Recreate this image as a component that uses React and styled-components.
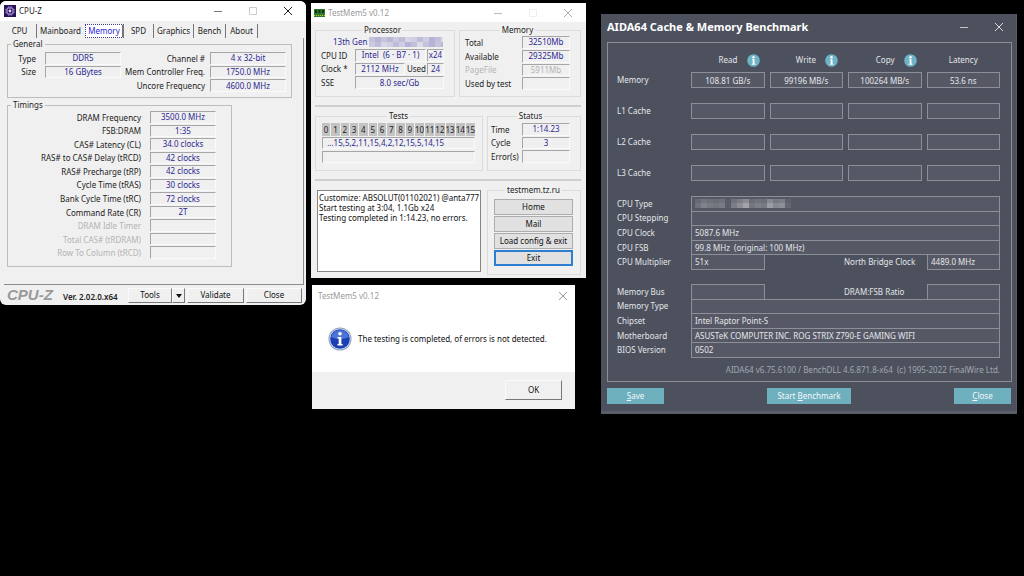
import React, { useId } from 'react';
import styled, { createGlobalStyle, css } from 'styled-components';

const GlobalStyle = createGlobalStyle`
    * {
        box-sizing: border-box;
    }
    body {
        margin: 0;
        background: #000;
    }
    button, input, textarea {
        font: inherit;
        color: inherit;
        margin: 0;
        min-width: 0;
        border-radius: 0;
        outline: none;
    }
`;

const sans = `"Noto Sans", "Open Sans", sans-serif`;

/* ---------- desktop ---------- */

const Desktop = styled.main`
    min-height: 100vh;
    background: #000;
    display: grid;
    grid-template-columns: 306fr 280fr 431fr;
    align-items: start;
    padding-right: 7px;
`;

const Column = styled.div`
    display: flex;
    flex-direction: column;
    min-width: 0;
    padding: ${(props) => props.$pad};
`;

const Window = styled.section`
    background: ${(props) => props.$bg || '#f0f0f0'};
    border-radius: ${(props) => props.$radius || '0'};
    overflow: hidden;
    font: 8px/10px ${sans};
    color: #222;
`;

const TitleBar = styled.header`
    height: ${(props) => props.$height || '20px'};
    background: ${(props) => props.$bg || '#fff'};
    color: ${(props) => props.$color || '#222'};
    padding: ${(props) => props.$pad || '0 13px 0 4px'};
    display: flex;
    align-items: center;
    gap: 3px;
`;

const Title = styled.h1`
    flex: 1;
    margin: 0;
    font: ${(props) => props.$font || '400 8px/12px'} ${sans};
    white-space: nowrap;
`;

const Controls = styled.div`
    display: flex;
    gap: ${(props) => props.$gap || '25px'};
`;

const ControlButton = styled.button`
    display: flex;
    border: 0;
    padding: 0;
    background: none;
    color: ${(props) => props.$color || 'inherit'};
`;

const controlPaths = {
    Minimize: 'M1 5.5H9',
    Maximize: 'M1.5 1.5H8.5V8.5H1.5Z',
    Close: 'M1 1L9 9M9 1L1 9',
};

function Control({ name, color }) {
    return (
        <ControlButton type="button" aria-label={name} $color={color}>
            <svg width="10" height="10" viewBox="0 0 10 10">
                <path d={controlPaths[name]} fill="none" stroke="currentColor" />
            </svg>
        </ControlButton>
    );
}

/* ---------- classic controls ---------- */

const Group = styled.fieldset`
    border: 1px solid ${(props) => props.$line || '#bdbdbd'};
    margin: 0;
    min-width: 0;
    padding: ${(props) => props.$pad};
    flex: ${(props) => props.$flex || 'none'};
`;

const Legend = styled.legend`
    padding: 0 2px;
    margin-left: ${(props) => (props.$center ? 'auto' : '3px')};
    margin-right: auto;
    line-height: 10px;
`;

const Rows = styled.div`
    display: grid;
    grid-template-rows: repeat(${(props) => props.$count}, 1fr);
    height: ${(props) => props.$height};
`;

const Row = styled.div`
    display: flex;
    align-items: stretch;
    gap: ${(props) => props.$gap || '0'};
    min-width: 0;
    min-height: 0;
`;

const Label = styled.label`
    flex: ${(props) => (props.$width ? `0 0 ${props.$width}` : '1')};
    text-align: ${(props) => props.$align || 'left'};
    color: ${(props) => (props.$off ? '#b4b4b4' : '#222')};
    align-self: center;
    white-space: nowrap;
`;

const Readout = styled.input`
    flex: ${(props) => (props.$width ? `0 0 ${props.$width}` : '1')};
    width: 100%;
    padding: 0;
    margin-bottom: 1px;
    background: #f0f0f0;
    border: 1px solid;
    border-color: #a6a6a6 #fafafa #fafafa #a6a6a6;
    color: ${(props) => (props.$off ? '#b4b4b4' : '#2c2890')};
    text-align: ${(props) => props.$align || 'center'};
`;

function LabeledReadout({ label, value = '', labelWidth, width, align, off, labelGap }) {
    const id = useId();
    return (
        <Row $gap={labelGap}>
            <Label htmlFor={id} $width={labelWidth} $align={align} $off={off}>{label}</Label>
            <Readout id={id} readOnly value={value} $width={width} $off={off} />
        </Row>
    );
}

/* ---------- CPU-Z ---------- */

const TabList = styled.nav`
    display: flex;
    padding: 3px 0 0 3px;
`;

const Tab = styled.button`
    width: ${(props) => props.$width};
    height: 14px;
    padding: 0;
    border: 0;
    border-right: 1px solid #777;
    background: none;
    white-space: nowrap;
    ${(props) => props.$plain && css`
        border-right-color: transparent;
    `}
    ${(props) => props.$active && css`
        border: 1px dotted #3a3a8c;
        border-right: 2px solid #777;
        background: #fff;
        color: #2a22d8;
    `}
`;

const TabPanel = styled.div`
    margin: 0 2px 0 4px;
    padding: 1px 0 17px 3px;
    border-right: 1px solid #8c8c8c;
    border-bottom: 1px solid #8c8c8c;
`;

const GeneralGrid = styled.div`
    display: grid;
    grid-template-columns: 113px 1fr;
`;

const TimingsWrap = styled.div`
    margin: 2px 71px 0 0;
`;

const CpuzFooter = styled.footer`
    display: flex;
    align-items: center;
    gap: 2px;
    height: 20px;
    padding: 0 4px 0 7px;
`;

const CpuzName = styled.strong`
    flex: 0 0 54px;
    font: italic 700 15px/18px "Liberation Sans", sans-serif;
    color: #999;
`;

const Version = styled.span`
    flex: 1;
    font: 600 8px/10px ${sans};
    padding-top: 3px;
    white-space: nowrap;
`;

const RaisedButton = styled.button`
    flex: 0 0 ${(props) => props.$width || '57px'};
    height: ${(props) => props.$height || '15px'};
    padding: 0;
    border: 1px solid;
    border-color: #fafafa #777 #777 #fafafa;
    background: #f0f0f0;
    color: #111;
`;

const SplitButton = styled.div`
    display: flex;
`;

const tabs = [
    ['CPU', '34px'],
    ['Mainboard', '48px'],
    ['Memory', '39px'],
    ['SPD', '30px'],
    ['Graphics', '40px'],
    ['Bench', '32px'],
    ['About', '32px'],
];

const timings = [
    ['DRAM Frequency', '3500.0 MHz'],
    ['FSB:DRAM', '1:35'],
    ['CAS# Latency (CL)', '34.0 clocks'],
    ['RAS# to CAS# Delay (tRCD)', '42 clocks'],
    ['RAS# Precharge (tRP)', '42 clocks'],
    ['Cycle Time (tRAS)', '30 clocks'],
    ['Bank Cycle Time (tRC)', '72 clocks'],
    ['Command Rate (CR)', '2T'],
    ['DRAM Idle Timer', ''],
    ['Total CAS# (tRDRAM)', ''],
    ['Row To Column (tRCD)', ''],
];

function CpuzIcon() {
    return (
        <svg width="12" height="12" viewBox="0 0 12 12" aria-hidden="true">
            <rect width="12" height="12" fill="#2a1259" />
            <rect x="3" y="3" width="6" height="6" rx="1" fill="none" stroke="#c9b8ee" />
            <path d="M4.5 1V3M6 1V3M7.5 1V3M4.5 9V11M6 9V11M7.5 9V11M1 4.5H3M1 6H3M1 7.5H3M9 4.5H11M9 6H11M9 7.5H11" stroke="#9a83d0" strokeWidth=".6" />
            <circle cx="6" cy="6" r="1.4" fill="#e8defc" />
        </svg>
    );
}

function CpuZ() {
    return (
        <Window $radius="6px" aria-label="CPU-Z">
            <TitleBar>
                <CpuzIcon />
                <Title>CPU-Z</Title>
                <Controls>
                    <Control name="Minimize" color="#777" />
                    <Control name="Maximize" color="#ccc" />
                    <Control name="Close" color="#222" />
                </Controls>
            </TitleBar>
            <TabList role="tablist">
                {tabs.map(([name, width]) => (
                    <Tab
                        key={name}
                        type="button"
                        role="tab"
                        aria-selected={name === 'Memory'}
                        $width={width}
                        $active={name === 'Memory'}
                        $plain={name === 'Mainboard'}
                    >
                        {name}
                    </Tab>
                ))}
            </TabList>
            <TabPanel role="tabpanel">
                <Column $pad="0 11px 0 0">
                    <Group $pad="3px 5px 4px 0">
                        <Legend>General</Legend>
                        <GeneralGrid>
                            <Rows $count={3} $height="41px">
                                <LabeledReadout label="Type" value="DDR5" width="76px" align="right" labelGap="9px" />
                                <LabeledReadout label="Size" value="16 GBytes" width="76px" align="right" labelGap="9px" />
                            </Rows>
                            <Rows $count={3} $height="41px">
                                <LabeledReadout label="Channel #" value="4 x 32-bit" width="76px" align="right" labelGap="5px" />
                                <LabeledReadout label="Mem Controller Freq." value="1750.0 MHz" width="76px" align="right" labelGap="5px" />
                                <LabeledReadout label="Uncore Frequency" value="4600.0 MHz" width="76px" align="right" labelGap="5px" />
                            </Rows>
                        </GeneralGrid>
                    </Group>
                </Column>
                <TimingsWrap>
                    <Group $pad="1px 15px 6px 0">
                        <Legend>Timings</Legend>
                        <Rows $count={11} $height="149px">
                            {timings.map(([label, value]) => (
                                <LabeledReadout
                                    key={label}
                                    label={label}
                                    value={value}
                                    width="66px"
                                    align="right"
                                    labelGap="9px"
                                    off={!value}
                                />
                            ))}
                        </Rows>
                    </Group>
                </TimingsWrap>
            </TabPanel>
            <CpuzFooter>
                <CpuzName>CPU-Z</CpuzName>
                <Version>Ver. 2.02.0.x64</Version>
                <SplitButton>
                    <RaisedButton type="button" $width="44px">Tools</RaisedButton>
                    <RaisedButton type="button" $width="13px" aria-label="More tools">
                        <svg width="6" height="4" viewBox="0 0 6 4"><path d="M0 0H6L3 4Z" fill="#111" /></svg>
                    </RaisedButton>
                </SplitButton>
                <RaisedButton type="button">Validate</RaisedButton>
                <RaisedButton type="button" $width="56px">Close</RaisedButton>
            </CpuzFooter>
        </Window>
    );
}

/* ---------- TestMem5 ---------- */

const MemBody = styled.div`
    padding: 3px 5px 3px 4px;
`;

const Panels = styled.div`
    display: flex;
    gap: ${(props) => props.$gap || '4px'};
`;

const Divider = styled.hr`
    height: 2px;
    margin: 8px 0 4px;
    border: 0;
    background: #cfcfcf;
`;

const CpuName = styled.div`
    display: flex;
    align-items: center;
    gap: 2px;
    padding-left: 12px;
    color: #2c2890;
    white-space: nowrap;
`;

const TestCells = styled.ol`
    display: grid;
    grid-template-columns: repeat(16, 1fr);
    gap: 1px;
    margin: 0;
    padding: 0;
    list-style: none;
`;

const TestCell = styled.li`
    height: 13px;
    line-height: 13px;
    background: #c3c3c3;
    text-align: center;
`;

const TestStack = styled.div`
    display: grid;
    grid-template-rows: 13px 13px 13px;
    row-gap: 1px;
`;

const Log = styled.textarea`
    flex: 1;
    height: 82px;
    margin: 5px 2px 0;
    padding: 2px 1px;
    border: 1px solid #858585;
    background: #fff;
    color: #111;
    resize: none;
    overflow: hidden;
    white-space: pre;
`;

const FlatButton = styled.button`
    height: 16px;
    padding: 0;
    border: 1px solid #adadad;
    background: #e1e1e1;
    color: #111;
    ${(props) => props.$focused && css`
        border: 2px solid #2f7fd0;
    `}
`;

const ButtonStack = styled.div`
    display: flex;
    flex-direction: column;
    gap: 1px;
`;

function MemIcon() {
    return (
        <svg width="11" height="8" viewBox="0 0 11 8" aria-hidden="true">
            <rect width="11" height="8" fill="#2c7a2c" />
            <path d="M1 1H3V4H1ZM4.5 1H6.5V4H4.5ZM8 1H10V4H8Z" fill="#123512" />
            <path d="M0 6.5H11" stroke="#d3c832" strokeDasharray="1 1" />
        </svg>
    );
}

const cpuMosaic = ['#c3c2da', '#b7b5d6', '#c6c5dc', '#b9b8d8', '#cac9de', '#bfbdd9', '#d6d5e4', '#cfcee2', '#bebcdb', '#cfcde2', '#b5b3d8', '#c1bfdc', '#dddce8'];

function CpuMosaic() {
    return (
        <svg width="74" height="10" viewBox="0 0 74 10" aria-hidden="true">
            {cpuMosaic.map((fill, i) => (
                <g key={i}>
                    <rect x={i * 6} width="6" height="5" fill={fill} />
                    <rect x={i * 6} y="5" width="6" height="5" fill={cpuMosaic[(i + 4) % 13]} />
                </g>
            ))}
        </svg>
    );
}

const logText = [
    'Customize: ABSOLUT(01102021) @anta777',
    'Start testing at 3:04, 1.1Gb x24',
    'Testing completed in 1:14.23, no errors.',
].join('\n');

function TestMem() {
    const cpuId = useId();
    const clock = useId();
    const used = useId();
    return (
        <Window aria-label="TestMem5">
            <TitleBar $height="19px" $color="#999" $pad="0 13px 0 3px">
                <MemIcon />
                <Title>TestMem5 v0.12</Title>
                <Controls>
                    <Control name="Minimize" color="#bbb" />
                    <Control name="Maximize" color="#eee" />
                    <Control name="Close" color="#aaa" />
                </Controls>
            </TitleBar>
            <MemBody>
                <Panels>
                    <Group $line="#dcdcdc" $pad="0 10px 6px 5px" $flex="1">
                        <Legend $center>Processor</Legend>
                        <Rows $count={4} $height="55px">
                            <CpuName>13th Gen <CpuMosaic /></CpuName>
                            <Row $gap="1px">
                                <Label htmlFor={cpuId} $width="33px">CPU ID</Label>
                                <Readout id={cpuId} readOnly value="Intel  (6 · B7 · 1)" />
                                <Readout aria-label="Threads" readOnly value="x24" $width="17px" />
                            </Row>
                            <Row $gap="1px">
                                <Label htmlFor={clock} $width="33px">Clock *</Label>
                                <Readout id={clock} readOnly value="2112 MHz" />
                                <Label htmlFor={used} $width="20px" $align="right">Used</Label>
                                <Readout id={used} readOnly value="24" $width="17px" />
                            </Row>
                            <LabeledReadout label="SSE" value="8.0 sec/Gb" labelWidth="33px" labelGap="1px" />
                        </Rows>
                    </Group>
                    <Group $line="#dcdcdc" $pad="1px 10px 5px 5px" $flex="0 0 122px">
                        <Legend $center>Memory</Legend>
                        <Rows $count={4} $height="55px">
                            <LabeledReadout label="Total" value="32510Mb" width="48px" />
                            <LabeledReadout label="Available" value="29325Mb" width="48px" />
                            <LabeledReadout label="PageFile" value="5911Mb" width="48px" off />
                            <LabeledReadout label="Used by test" width="48px" />
                        </Rows>
                    </Group>
                </Panels>
                <Divider />
                <Panels>
                    <Group $line="#dcdcdc" $pad="2px 7px 6px 6px" $flex="1">
                        <Legend $center>Tests</Legend>
                        <TestStack>
                            <TestCells start="0">
                                {Array.from({ length: 16 }, (_, i) => <TestCell key={i}>{i}</TestCell>)}
                            </TestCells>
                            <Readout aria-label="Test order" readOnly value="  ...15,5,2,11,15,4,2,12,15,5,14,15" $align="left" />
                            <Readout aria-label="Progress" readOnly value="" />
                        </TestStack>
                    </Group>
                    <Group $line="#dcdcdc" $pad="2px 10px 6px 3px" $flex="0 0 94px">
                        <Legend $center>Status</Legend>
                        <Rows $count={3} $height="41px">
                            <LabeledReadout label="Time" value="1:14.23" width="48px" />
                            <LabeledReadout label="Cycle" value="3" width="48px" />
                            <LabeledReadout label="Error(s)" width="48px" />
                        </Rows>
                    </Group>
                </Panels>
                <Divider />
                <Panels>
                    <Log aria-label="Log" readOnly value={logText} />
                    <Group $line="#dcdcdc" $pad="4px 7px 8px 6px" $flex="0 0 94px">
                        <Legend $center>testmem.tz.ru</Legend>
                        <ButtonStack>
                            <FlatButton type="button">Home</FlatButton>
                            <FlatButton type="button">Mail</FlatButton>
                            <FlatButton type="button">Load config &amp; exit</FlatButton>
                            <FlatButton type="button" $focused>Exit</FlatButton>
                        </ButtonStack>
                    </Group>
                </Panels>
            </MemBody>
        </Window>
    );
}

/* ---------- message box ---------- */

const DialogWrap = styled.div`
    padding: 7px 11px 0 1px;
`;

const Message = styled.div`
    display: flex;
    align-items: center;
    gap: 6px;
    height: 65px;
    padding: 0 0 2px 16px;
    color: #111;
`;

const Text = styled.p`
    margin: 0;
    white-space: nowrap;
`;

const DialogFooter = styled.footer`
    display: flex;
    justify-content: flex-end;
    padding: 8px 13px 9px;
    background: #f0f0f0;
`;

function InfoIcon() {
    return (
        <svg width="24" height="24" viewBox="0 0 24 24" aria-hidden="true">
            <circle cx="12" cy="12" r="11.5" fill="#8fa3c4" />
            <circle cx="12" cy="12" r="10.5" fill="#d5dff0" />
            <circle cx="12" cy="12" r="9.8" fill="#1c3fb4" />
            <path d="M3 10a9.3 9.3 0 0 1 18 0Q12 14 3 10Z" fill="#4a74d8" />
            <circle cx="12" cy="6.8" r="1.8" fill="#fff" />
            <path d="M9.5 10H13.4V17H14.6V18.4H9.5V17H10.7V11.4H9.5Z" fill="#fff" />
        </svg>
    );
}

function MessageBox() {
    return (
        <DialogWrap>
            <Window $bg="#fff" role="dialog" aria-label="TestMem5 v0.12">
                <TitleBar $height="22px" $color="#999" $pad="0 7px 0 6px">
                    <Title>TestMem5 v0.12</Title>
                    <Control name="Close" color="#999" />
                </TitleBar>
                <Message>
                    <InfoIcon />
                    <Text>The testing is completed, of errors is not detected.</Text>
                </Message>
                <DialogFooter>
                    <RaisedButton type="button" $height="20px">OK</RaisedButton>
                </DialogFooter>
            </Window>
        </DialogWrap>
    );
}

/* ---------- AIDA64 ---------- */

const AidaWindow = styled(Window)`
    background: #4c515d;
    border-bottom: 3px solid #5a5e69;
    border-right: 1px solid #5a5e69;
    color: #e4e6ea;
`;

const AidaPanel = styled.div`
    margin: 0 4px 0 6px;
    padding: 7px 11px 0 9px;
    border: 1px solid #8b8f98;
`;

const BenchGrid = styled.div`
    display: grid;
    grid-template-columns: 69px repeat(4, 1fr);
    gap: 15px 5px;
    align-items: center;
`;

const BenchHead = styled.div`
    height: 22px;
    padding-bottom: 2px;
    display: flex;
    align-items: center;
    justify-content: ${(props) => (props.$info ? 'flex-end' : 'center')};
    gap: 9px;
    padding-right: ${(props) => (props.$info ? '5px' : '0')};
`;

const BenchLabel = styled.span`
    white-space: nowrap;
`;

const AidaField = styled.input`
    flex: ${(props) => (props.$width ? `0 0 ${props.$width}` : '1')};
    width: 100%;
    height: ${(props) => (props.$width || props.$wide ? 'auto' : '16px')};
    padding: 0 3px;
    border: 1px solid #8b8f98;
    background: #565965;
    text-align: ${(props) => (props.$width || props.$wide ? 'left' : 'center')};
`;

const Details = styled.div`
    display: grid;
    grid-auto-rows: 1fr;
    height: 73px;
    margin-top: 15px;
`;

const DetailRow = styled.div`
    display: flex;
    align-items: stretch;
    min-height: 0;
    margin-bottom: -1px;
`;

const DetailLabel = styled.label`
    flex: 0 0 ${(props) => props.$width || '74px'};
    align-self: center;
    white-space: nowrap;
`;

const Spacer = styled.span`
    flex: 1;
`;

const MaskedValue = styled.div`
    flex: 1;
    display: flex;
    align-items: center;
    padding: 0 3px;
    border: 1px solid #8b8f98;
    background: #565965;
`;

const Copyright = styled.p`
    margin: 0;
    line-height: 26px;
    height: 24px;
    text-align: right;
    color: #a3a7b0;
    white-space: nowrap;
`;

const AidaFooter = styled.footer`
    display: flex;
    justify-content: space-between;
    padding: 6px 5px 7px 6px;
`;

const AidaButton = styled.button`
    width: ${(props) => props.$width || '57px'};
    height: 16px;
    padding: 0;
    border: 0;
    background: #6fb0bf;
    color: #f4f8fa;
`;

function BlueInfo() {
    return (
        <svg width="13" height="13" viewBox="0 0 13 13" aria-hidden="true">
            <circle cx="6.5" cy="6.5" r="6.3" fill="#6fb3c6" />
            <circle cx="6.5" cy="3.2" r="1.2" fill="#fff" />
            <path d="M5 5.2H7.5V9.8H8.3V10.8H4.8V9.8H5.7V6.2H5Z" fill="#fff" />
        </svg>
    );
}

const typeMosaic = ['#6f727c', '#80838b', '#777a83', '#73767f', '#7a7c85', '#5a5d69', '#7b7e87', '#8c8f96', '#a2a4aa', '#74777f', '#7d8089', '#777a83', '#9c9ea5', '#85888f', '#8c8f96', '#646771'];

function TypeMosaic() {
    return (
        <svg width="96" height="9" viewBox="0 0 96 9" aria-hidden="true">
            {typeMosaic.map((fill, i) => (
                <g key={i}>
                    <rect x={i * 6} width="6" height="4" fill={fill} opacity=".7" />
                    <rect x={i * 6} y="4" width="6" height="5" fill={fill} />
                </g>
            ))}
        </svg>
    );
}

const benchHeads = [['Read', true], ['Write', true], ['Copy', true], ['Latency', false]];

const benchRows = [
    ['Memory', ['108.81 GB/s', '99196 MB/s', '100264 MB/s', '53.6 ns']],
    ['L1 Cache', ['', '', '', '']],
    ['L2 Cache', ['', '', '', '']],
    ['L3 Cache', ['', '', '', '']],
];

function Detail({ label, value = '' }) {
    const id = useId();
    return (
        <DetailRow>
            <DetailLabel htmlFor={id}>{label}</DetailLabel>
            <AidaField id={id} readOnly value={value} $wide />
        </DetailRow>
    );
}

function DetailPair({ label, value = '', label2, value2 = '' }) {
    const id = useId();
    return (
        <DetailRow>
            <DetailLabel htmlFor={id}>{label}</DetailLabel>
            <AidaField id={id} readOnly value={value} $width="74px" />
            <Spacer />
            <DetailLabel htmlFor={`${id}b`} $width="83px">{label2}</DetailLabel>
            <AidaField id={`${id}b`} readOnly value={value2} $width="73px" />
        </DetailRow>
    );
}

function Aida() {
    return (
        <AidaWindow aria-label="AIDA64">
            <TitleBar $height="28px" $bg="none" $color="#fff" $pad="0 12px 3px 6px">
                <Title $font="700 11px/14px">AIDA64 Cache &amp; Memory Benchmark</Title>
                <Controls>
                    <Control name="Minimize" color="#c4c6cb" />
                    <Control name="Close" color="#d8dade" />
                </Controls>
            </TitleBar>
            <AidaPanel>
                <BenchGrid>
                    <span />
                    {benchHeads.map(([name, info]) => (
                        <BenchHead key={name} $info={info}>
                            {name}
                            {info && <BlueInfo />}
                        </BenchHead>
                    ))}
                </BenchGrid>
                <BenchGrid>
                    {benchRows.map(([name, values]) => (
                        <React.Fragment key={name}>
                            <BenchLabel>{name}</BenchLabel>
                            {values.map((value, i) => (
                                <AidaField key={i} aria-label={`${name} ${benchHeads[i][0]}`} readOnly value={value} />
                            ))}
                        </React.Fragment>
                    ))}
                </BenchGrid>
                <Details>
                    <DetailRow>
                        <DetailLabel as="span">CPU Type</DetailLabel>
                        <MaskedValue><TypeMosaic /></MaskedValue>
                    </DetailRow>
                    <Detail label="CPU Stepping" />
                    <Detail label="CPU Clock" value="5087.6 MHz" />
                    <Detail label="CPU FSB" value="99.8 MHz  (original: 100 MHz)" />
                    <DetailPair label="CPU Multiplier" value="51x" label2="North Bridge Clock" value2="4489.0 MHz" />
                </Details>
                <Details>
                    <DetailPair label="Memory Bus" label2="DRAM:FSB Ratio" />
                    <Detail label="Memory Type" />
                    <Detail label="Chipset" value="Intel Raptor Point-S" />
                    <Detail label="Motherboard" value="ASUSTeK COMPUTER INC. ROG STRIX Z790-E GAMING WIFI" />
                    <Detail label="BIOS Version" value="0502" />
                </Details>
                <Copyright>AIDA64 v6.75.6100 / BenchDLL 4.6.871.8-x64&nbsp; (c) 1995-2022 FinalWire Ltd.</Copyright>
            </AidaPanel>
            <AidaFooter>
                <AidaButton type="button"><u>S</u>ave</AidaButton>
                <AidaButton type="button" $width="84px">Start <u>B</u>enchmark</AidaButton>
                <AidaButton type="button"><u>C</u>lose</AidaButton>
            </AidaFooter>
        </AidaWindow>
    );
}

const App = () => {
    return (
        <>
            <GlobalStyle />
            <Desktop>
                <Column $pad="1px 0 0">
                    <CpuZ />
                </Column>
                <Column $pad="3px 0 0 5px">
                    <TestMem />
                    <MessageBox />
                </Column>
                <Column $pad="14px 0 0 15px">
                    <Aida />
                </Column>
            </Desktop>
        </>
    );
};

export default App;
